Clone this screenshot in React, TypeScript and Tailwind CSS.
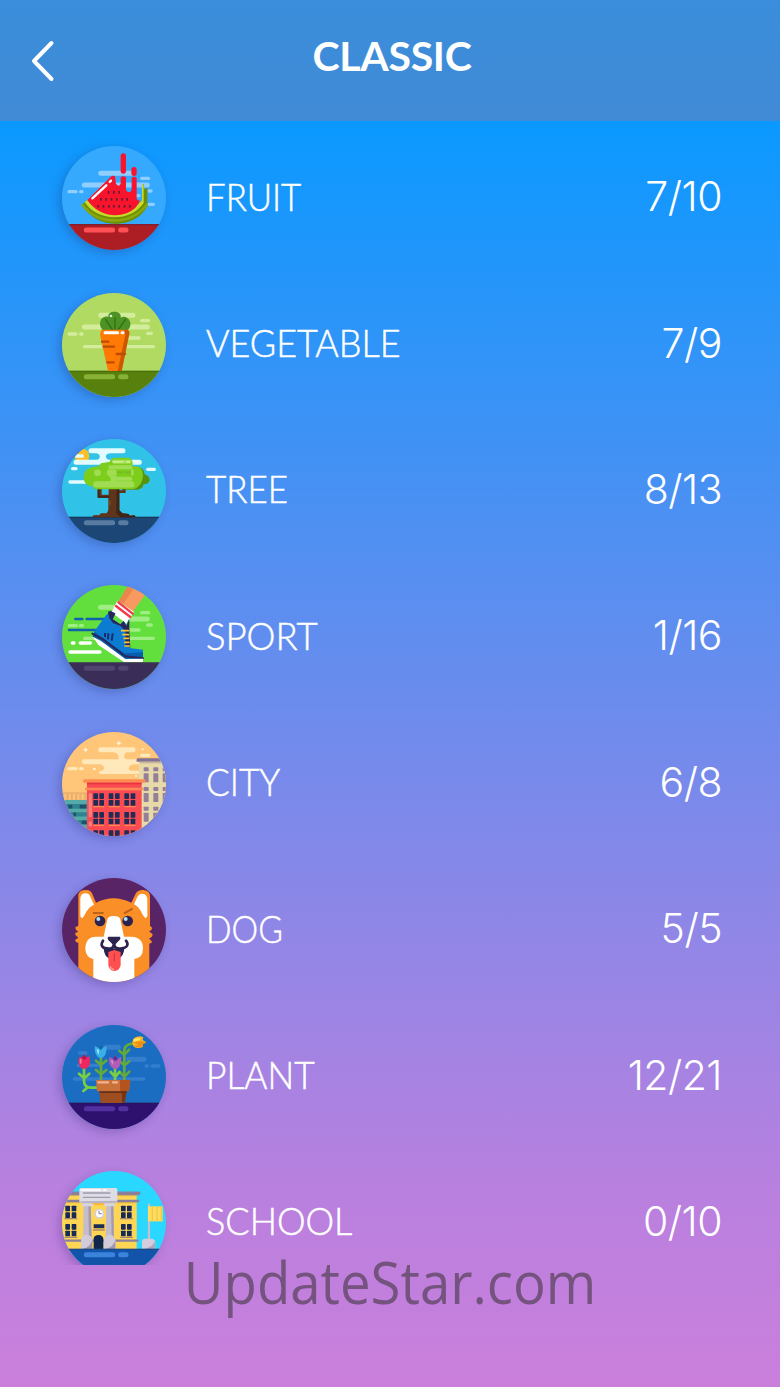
import React from "react";

type IconProps = {
  top: number;
  sky: string;
  children: React.ReactNode;
};

// every icon is drawn on a 312 unit disc, `top` is where the disc starts
const Disc: React.FC<IconProps> = ({ top, sky, children }) => {
  return (
    <div className="h-[104px] w-[104px] shrink-0 rounded-full shadow-[-3px_3px_10px_rgba(30,30,90,0.25)]">
      <svg
        viewBox={`35 ${top} 312 312`}
        className="h-full w-full rounded-full"
        fill="none"
        strokeLinecap="round"
      >
        <rect x="35" y={top} width="312" height="312" fill={sky} />
        {children}
      </svg>
    </div>
  );
};

type GroundProps = { y: number; fill: string; edge: string; shine: string };

const Ground: React.FC<GroundProps> = ({ y, fill, edge, shine }) => (
  <>
    <rect x="30" y={y} width="320" height="90" fill={fill} />
    <rect x="30" y={y - 1} width="320" height="4" fill={edge} />
    <path d={`M108 ${y + 17}H187M211 ${y + 17}H227`} stroke={shine} strokeWidth="15" />
  </>
);

const Fruit = () => (
  <Disc top={30} sky="#35a9fd">
    <g stroke="#8fceff">
      <path d="M151 112H250M102 147H291" strokeWidth="15" />
      <path d="M56 167H77M91 167H95M274 127H295M255 179H266M296 165H302M296 205H309" strokeWidth="10" />
    </g>
    <Ground y={265} fill="#ad1d24" edge="#82202d" shine="#ff5055" />
    <path d="M95 207L111 192C150 239 232 240 275 193L275 147L281 145V162L285 157H291V211C254 281 139 283 95 207Z" fill="#6f8f00" />
    <path d="M103 198L111 192C151 239 232 240 275 193V146H280V201C241 260 139 257 103 198Z" fill="#c4dd2c" />
    <path d="M97 207C139 266 238 271 289 207" stroke="#88a80b" strokeWidth="8" />
    <path d="M111 192L180 124Q187 117 194 121L197 143Q205 155 211 143V124Q219 117 227 124V162Q236 176 244 162V126Q251 119 259 126V188Q261 195 269 193Q262 218 229 232C184 247 138 232 111 192Z" fill="#f9142d" />
    <path d="M219 60V105M251 101V112" stroke="#f9142d" strokeWidth="16" />
    <path d="M126 187L168 148M178 138L182 134" stroke="#fff" strokeWidth="7" />
    <g fill="#602033">
      {[174, 190, 206].map((x) => <rect key={x} x={x - 2} y="165" width="5" height="8" />)}
      {[151, 167, 183, 199, 215, 230].map((x) => <rect key={x} x={x - 2} y="186" width="5" height="8" />)}
      {[143, 159, 175, 190, 206, 222, 238].map((x) => <rect key={x} x={x - 2} y="207" width="5" height="8" />)}
    </g>
  </Disc>
);

const Vegetable = () => (
  <Disc top={32} sky="#b0da61">
    <g stroke="#d3ed9d">
      <path d="M151 99H248M102 134H291" strokeWidth="15" />
      <path d="M56 155H77M91 155H95M274 115H295M292 153H303M230 167H266M103 193H309" strokeWidth="10" />
    </g>
    <Ground y={266} fill="#57800d" edge="#47700d" shine="#87b236" />
    <path d="M157 143C143 128 149 106 164 103C173 102 175 105 175 105C171 94 181 88 193 88C206 88 213 95 211 106C223 98 237 107 240 121C242 132 235 143 227 146Z" fill="#4d9225" />
    <path d="M194 107V145M166 112L186 142M225 112L204 142" stroke="#306f14" strokeWidth="4" />
    <path d="M155 142H231Q240 146 236 159L214 266H173L150 161Q148 147 155 142Z" fill="#ff7905" />
    <path d="M222 142H231Q240 146 236 159L214 266H202L225 158Z" fill="#cb5700" />
    <path d="M164 151H202M215 151H218" stroke="#fff" strokeWidth="9" />
    <path d="M155 178H174M160 193H191M199 215H224M171 240H190" stroke="#bd4c03" strokeWidth="7" />
    <circle cx="182" cy="101" r="4" fill="#d9f4ce" />
  </Disc>
);

const Tree = () => (
  <Disc top={33} sky="#31c2e8">
    <circle cx="95" cy="84" r="22" fill="#fdbf28" />
    <g stroke="#e2fbff">
      <path d="M122 68H218M77 103H267" strokeWidth="15" />
      <path d="M79 84H96M67 122H77M292 124H312M59 162H115" strokeWidth="10" />
    </g>
    <path d="M138 75H180C162 78 163 91 178 97H139C151 92 153 79 138 75Z" fill="#e2fbff" />
    <Ground y={267} fill="#1b4676" edge="#183959" shine="#597ba1" />
    <path d="M127 268V263Q134 260 146 262L152 256H169L174 246V209H142V183H154V200H175V170H207V187H216V181H226V195H207V247L216 256L235 258L238 263L253 262L256 268Z" fill="#5e351b" />
    <path d="M142 183V209H175V204H147V183ZM199 183H207V247L216 256L235 258L238 263L253 262L256 268H211L198 256Z" fill="#3e2518" />
    <path d="M179 218V231" stroke="#865431" strokeWidth="3" />
    <path d="M255 116Q281 115 283 139Q298 144 298 157Q295 170 279 169Q279 182 263 185H225Z" fill="#57930d" />
    <path d="M119 120Q129 115 147 114Q148 104 162 104L178 101Q182 89 198 89H231Q247 90 247 106L246 115H257Q277 116 278 142Q276 164 267 172Q258 184 244 184H142Q129 185 127 174C108 176 99 162 100 145Q101 126 119 120Z" fill="#7dce1c" />
    <g stroke="#a1dd53">
      <path d="M141 134H142M179 134H190M138 169H243" strokeWidth="19" />
      <path d="M191 101H237M180 118H240M190 152H240" strokeWidth="12" />
      <path d="M246 128V139" strokeWidth="8" />
    </g>
    <path d="M189 101H218M229 101H238" stroke="#c9ef87" strokeWidth="6" />
    <path d="M202 133H216M226 133H238" stroke="#76bd24" strokeWidth="7" />
    <path d="M174 143H199C193 157 201 166 203 168H172C184 158 184 148 174 143Z" fill="#a1dd53" />
  </Disc>
);

const Sport = () => (
  <Disc top={35} sky="#62df3d">
    <g stroke="#9eee83">
      <path d="M151 102H190M233 137H291" strokeWidth="15" />
      <path d="M57 157H78M90 157H96M274 118H295M292 155H303M236 170H266M103 195H309" strokeWidth="10" />
    </g>
    <path d="M75 137H96M109 137H165M56 170H142" stroke="#1261ac" strokeWidth="8" />
    <path d="M66 209H71M90 209H120M59 236H149" stroke="#fff" strokeWidth="10" />
    <Ground y={268} fill="#3a2e58" edge="#413058" shine="#504571" />
    <path d="M206 83L236 36L290 57L247 115Z" fill="#f89a60" />
    <path d="M205 83L234 36L249 48L219 91Z" fill="#eb854e" />
    <path d="M201 82L251 115L229 151L183 117Z" fill="#fff" />
    <path d="M204 87L247 121M197 98L240 131" stroke="#f53a4b" strokeWidth="7" />
    <path d="M181 113L195 120L187 137L210 153L220 143L228 156L235 137L238 224L278 229V262H225L127 189L131 175L167 126Z" fill="#0b7cd1" />
    <path d="M173 115L181 113L195 121L187 138L210 153L220 143L228 158L237 137V175H227L211 158L188 149L177 135Z" fill="#29265a" />
    <path d="M226 164H236L240 223L225 216Z" fill="#29265a" />
    <path d="M134 176L222 240L278 237V262H225L127 189Z" fill="#075ead" />
    <path d="M126 181L158 198L181 216L225 249L278 255" stroke="#29265a" strokeWidth="6" />
    <path d="M127 190L151 202L225 257L279 256L277 266H221L145 216Z" fill="#fff" />
    <path d="M164 179V191M174 180L173 198M187 180L184 202" stroke="#1a2867" strokeWidth="6" strokeLinecap="butt" />
    <path d="M214 172H234M218 184H234M221 195H235M223 207H236M224 218H237" stroke="#ffc52b" strokeWidth="5" />
  </Disc>
);

const PaneGrid: React.FC<{ xs: number[]; ys: number[]; size: number; fill: string }> = ({ xs, ys, size, fill }) => (
  <g fill={fill}>
    {ys.map((y) =>
      xs.map((x) => <rect key={`${x}-${y}`} x={x} y={y} width={size} height={size + 3} rx="2" />)
    )}
  </g>
);

const City = () => (
  <Disc top={36} sky="#ffc67a">
    <g stroke="#ffe9bb">
      <path d="M151 89H248M102 125H265" strokeWidth="15" />
      <path d="M56 146H77M91 146H95M274 106H295M151 157H275" strokeWidth="10" />
    </g>
    <path d="M188 96H230C217 103 218 115 232 119L252 132C233 134 229 151 245 154H150C166 151 164 135 149 132H185Q202 129 205 116Q206 99 188 96Z" fill="#ffe9bb" />
    <g fill="#fff4d5">
      <path d="M205 61L208 67L214 69L208 72L205 78L202 72L197 69L203 67ZM106 81L108 87L114 89L108 92L106 97L103 92L98 89L103 87Z" />
      <circle cx="132" cy="147" r="4" />
      <circle cx="277" cy="88" r="3" />
      <circle cx="257" cy="168" r="3" />
    </g>
    <rect x="35" y="217" width="80" height="28" fill="#eab06e" />
    <path d="M45 222V239M58 222V239M71 222V239M84 222V239M97 222V239" stroke="#ffc67a" strokeWidth="6" strokeLinecap="butt" />
    <rect x="35" y="240" width="80" height="110" fill="#53aaa7" />
    <rect x="35" y="252" width="80" height="14" fill="#2f8390" />
    <path d="M35 283H115M35 307H115" stroke="#2f8390" strokeWidth="13" strokeLinecap="butt" />
    <path d="M54 260H66M88 260H108M70 283H77M94 307H109" stroke="#1c526e" strokeWidth="11" strokeLinecap="butt" />
    <rect x="265" y="122" width="85" height="226" fill="#e8d9a8" />
    <path d="M265 125H332L327 115H261Q257 119 259 125Z" fill="#857193" />
    <rect x="269" y="125" width="64" height="5" fill="#c8b59a" />
    <g fill="#947f9b">
      {[280, 309, 337].map((x) => (
        <g key={x}>
          <rect x={x} y="142" width="15" height="12" rx="2" />
          <rect x={x} y="160" width="15" height="27" rx="2" />
          <rect x={x} y="201" width="15" height="12" rx="2" />
          <rect x={x} y="219" width="15" height="27" rx="2" />
          <rect x={x} y="260" width="15" height="12" rx="2" />
          <rect x={x} y="278" width="15" height="27" rx="2" />
        </g>
      ))}
    </g>
    <rect x="110" y="187" width="164" height="162" fill="#fa4b52" />
    <path d="M107 207H276" stroke="#ff8a56" strokeWidth="7" />
    <path d="M103 183H281" stroke="#ff8b51" strokeWidth="11" />
    <rect x="110" y="188" width="164" height="5" fill="#e83243" />
    <path d="M120 224V287M120 309V315" stroke="#ff7c7b" strokeWidth="10" />
    <PaneGrid xs={[129, 147, 175, 194, 222, 241]} ys={[220, 240, 276, 296, 331]} size={14} fill="#1e2c56" />
    <path d="M130 260H160M177 260H207M224 260H254M130 316H160M177 316H207M224 316H254" stroke="#ff8b51" strokeWidth="4" />
  </Disc>
);

const Dog = () => (
  <Disc top={37} sky="#592466">
    <path d="M84 350V231Q74 231 75 222L84 216Q72 207 75 202L84 198Q74 193 75 185L84 180V86Q89 72 108 73Q121 73 126 85L137 111Q189 84 243 111L257 82Q264 72 280 73Q299 75 299 92V180L305 186Q306 194 296 197L307 206Q306 216 296 218L305 228Q304 234 297 233V350Z" fill="#f98f26" />
    <path d="M90 151V104C90 90 94 83 106 83Q116 83 119 91L131 117C107 126 104 155 94 158ZM291 151V104Q291 84 276 84Q265 84 261 94L251 116C272 125 276 153 286 158Z" fill="#fff" />
    <path d="M171 161Q174 151 190 151Q207 151 210 161L221 213H244Q278 215 278 248Q278 277 252 280V350H129V280C116 279 105 267 105 248Q106 214 137 213H160Z" fill="#fff" />
    <path d="M130 142H158M223 142L245 130" stroke="#bf6319" strokeWidth="6" />
    <g fill="#2d234f">
      <circle cx="149" cy="166" r="16" />
      <circle cx="232" cy="166" r="16" />
      <path d="M174 213H208Q213 216 207 224L196 235H186L173 222Q170 216 174 213ZM160 249L222 249Q219 274 205 278H176Q162 272 160 249Z" />
    </g>
    <circle cx="144" cy="160" r="6" fill="#aee0fb" />
    <circle cx="226" cy="160" r="6" fill="#aee0fb" />
    <path d="M158 225C149 238 156 249 171 248Q189 252 191 234Q194 253 214 248C231 247 236 236 227 225" stroke="#2d234f" strokeWidth="8" />
    <path d="M191 229V246" stroke="#2d234f" strokeWidth="7" />
    <path d="M174 259L192 253L211 259V298Q209 315 192 316Q176 315 174 298Z" fill="#ff5050" />
    <path d="M192 264V286" stroke="#d93942" strokeWidth="4" />
    <path d="M180 304Q183 310 189 311" stroke="#ff9693" strokeWidth="5" />
  </Disc>
);

const Plant = () => (
  <Disc top={38} sky="#1b6dc1">
    <g stroke="#347ece">
      <path d="M166 105H204M234 141H281" strokeWidth="15" />
      <path d="M88 122H107M83 159H146M287 161H291M306 161H325M72 200H280" strokeWidth="10" />
    </g>
    <Ground y={272} fill="#2e116f" edge="#28145f" shine="#52309f" />
    <g stroke="#63aa3a" strokeWidth="8">
      <path d="M152 136V207M222 205V113Q224 96 247 94" />
      <path d="M137 145L149 155M168 145L155 155M137 173L149 183M168 173L155 183M207 116L219 125M236 112L226 123M208 147L219 156M237 147L226 156M208 179L219 190M237 178L226 189" />
    </g>
    <g stroke="#79cf42" strokeWidth="8">
      <path d="M101 167V205Q101 226 122 226H140M194 166V205M86 184L98 195M117 184L105 195M99 236L110 227M181 179L191 190M207 179L198 190" />
    </g>
    <path d="M87 133L98 136L102 126L109 136L117 130Q123 158 111 167L101 170L91 166Q81 152 87 133Z" fill="#ef275f" />
    <path d="M101 127L110 136L101 144L94 135Z" fill="#b41651" />
    <path d="M91 142V151" stroke="#ff7b95" strokeWidth="6" />
    <path d="M133 101L146 107L151 96L157 107L168 101C170 122 163 137 151 137C139 136 132 121 133 101Z" fill="#39afe9" />
    <path d="M151 96L158 107L151 113L145 106Z" fill="#1964a5" />
    <path d="M139 110Q138 120 146 128V113Z" fill="#94e5fa" />
    <path d="M177 134L188 139L194 128L202 139L212 133C213 154 208 168 195 171C181 168 174 153 177 134Z" fill="#b25cb5" />
    <path d="M194 129L203 140L195 147L187 139Z" fill="#5d2f98" />
    <path d="M182 143Q181 150 188 158V145Z" fill="#da91cf" />
    <path d="M246 91Q247 72 270 72L279 75L277 83L288 90L278 94V104Q257 111 249 101Z" fill="#fcb325" />
    <path d="M248 90L274 87L288 91L278 95L277 103Q262 108 250 100L265 98Z" fill="#eb9013" />
    <path d="M253 84L266 80" stroke="#ffe461" strokeWidth="8" />
    <path d="M137 203H240L236 237H140Z" fill="#c97139" />
    <path d="M209 203H240L236 237H209Z" fill="#b5531f" />
    <path d="M147 237H229L223 272H151Z" fill="#9d4d1f" />
    <path d="M214 237H229L223 272H216Z" fill="#773514" />
    <path d="M147 237H229V242H148Z" fill="#6c3015" />
    <path d="M144 210H173M188 210H200" stroke="#f1b392" strokeWidth="7" />
  </Disc>
);

const School = () => (
  <Disc top={34} sky="#29d7ff">
    <rect x="35" y="106" width="224" height="162" fill="#ffd554" />
    <path d="M35 101H265" stroke="#8b809c" strokeWidth="11" />
    <path d="M35 124H264M35 243H261" stroke="#8b809c" strokeWidth="7" />
    <path d="M35 108H259M35 129H259" stroke="#d6aa4d" strokeWidth="3" />
    <path d="M120 125L133 137H160V127Z" fill="#ffb630" />
    <PaneGrid xs={[45, 64, 212, 230]} ys={[138, 158, 193, 213]} size={14} fill="#152a56" />
    <path d="M44 177H79M211 177H246M44 233H79M211 233H246" stroke="#9f8574" strokeWidth="4" />
    <path d="M100 133H121L124 240H98ZM168 133H189L191 240H166Z" fill="#c3bdcc" />
    <path d="M114 133H121L124 240H116ZM182 133H189L191 240H184Z" fill="#a49ab0" />
    <rect x="87" y="85" width="114" height="45" rx="5" fill="#dedde5" />
    <path d="M88 125Q92 131 98 131H192Q200 130 201 123Z" fill="#b9b4c5" />
    <path d="M99 100H179M99 113H179" stroke="#9e9cae" strokeWidth="4" />
    <path d="M92 91H150M160 91H167" stroke="#fff" strokeWidth="5" />
    <path d="M98 135H124M165 135H191" stroke="#d7d4df" strokeWidth="9" />
    <path d="M92 268V242Q93 225 110 225Q127 227 127 244L117 268ZM160 268V242Q163 225 180 225Q195 228 196 246V268Z" fill="#d1cbda" />
    <path d="M126 241V268H97Q120 263 126 241ZM195 241V268H166Q189 263 195 241Z" fill="#a398ad" />
    <circle cx="147" cy="162" r="15" fill="#d4cfdc" />
    <circle cx="147" cy="162" r="10" fill="#fff" />
    <path d="M146 155V162H153" stroke="#817791" strokeWidth="3" />
    <path d="M130 194H162V206H130Z" fill="#1c2d55" />
    <path d="M129 211H162" stroke="#ad8b6c" strokeWidth="4" />
    <path d="M130 268V237Q131 226 145 226Q158 227 159 238V268Z" fill="#12274e" />
    <path d="M296 135V238" stroke="#c5bdd0" strokeWidth="7" />
    <rect x="293" y="140" width="44" height="45" fill="#ffdd60" />
    <path d="M306 142V184M320 142V184M333 142V184" stroke="#f5c744" strokeWidth="4" />
    <path d="M275 268V245Q275 238 284 237H306Q314 239 315 247V268Z" fill="#d4cddd" />
    <path d="M314 245V268H283Q306 263 314 245Z" fill="#afa5bd" />
    <Ground y={268} fill="#1254a9" edge="#1a4b88" shine="#3b83dc" />
  </Disc>
);

const categories = [
  { name: "FRUIT", score: "7/10", icon: <Fruit />, fit: "scale-x-[0.915]" },
  { name: "VEGETABLE", score: "7/9", icon: <Vegetable />, fit: "scale-x-[0.945]" },
  { name: "TREE", score: "8/13", icon: <Tree />, fit: "scale-x-[0.92]" },
  { name: "SPORT", score: "1/16", icon: <Sport />, fit: "scale-x-[0.96]" },
  { name: "CITY", score: "6/8", icon: <City />, fit: "scale-x-[0.925]" },
  { name: "DOG", score: "5/5", icon: <Dog />, fit: "scale-x-[0.885]" },
  { name: "PLANT", score: "12/21", icon: <Plant />, fit: "scale-x-[0.93]" },
  { name: "SCHOOL", score: "0/10", icon: <School />, fit: "scale-x-[0.95]" },
];

const App: React.FC = () => {
  return (
    <div className="flex h-[1387px] w-[780px] flex-col overflow-hidden bg-[linear-gradient(#0a99ff_121px,#6b8ced_700px,#b980df_1190px,#ca7fdb_1387px)] text-white">
      <header className="grid h-[121px] shrink-0 grid-cols-[104px_1fr_104px] bg-linear-to-b from-[#3a8edb] to-[#418ad6]">
        <button className="flex items-center justify-start pl-[30px]">
          <svg viewBox="0 0 26 42" className="h-[42px] w-[26px]" fill="none" stroke="white" strokeWidth="4" strokeLinecap="round" strokeLinejoin="round">
            <path d="M21.500 3L4 21L21.500 39" />
          </svg>
        </button>
        <h1 className="pt-[31px] pl-[4px] text-center font-['Lato'] text-[41px] leading-[49px] font-bold tracking-[-0.3px]">
          CLASSIC
        </h1>
      </header>
      <main className="h-[1144px] shrink-0 overflow-hidden pt-[4px]">
        {categories.map((item) => (
          <div key={item.name} className="flex h-[146.4px] items-center pr-[58px] pl-[62px]">
            {item.icon}
            <div className={`mb-[5px] ml-[40px] origin-left font-['Lato'] text-[38px] leading-[46px] font-light [-webkit-text-stroke:0.5px_white] ${item.fit}`}>
              {item.name}
            </div>
            <div className="mb-[4px] ml-auto font-['Inter'] text-[41px] leading-[46px] font-light tracking-[-0.5px]">
              {item.score}
            </div>
          </div>
        ))}
      </main>
      <footer className="-mt-[22px] scale-x-[0.94] text-center font-['Open_Sans'] text-[58px] leading-[78px] text-[#75537f]">
        UpdateStar.com
      </footer>
    </div>
  );
};

export default App;
